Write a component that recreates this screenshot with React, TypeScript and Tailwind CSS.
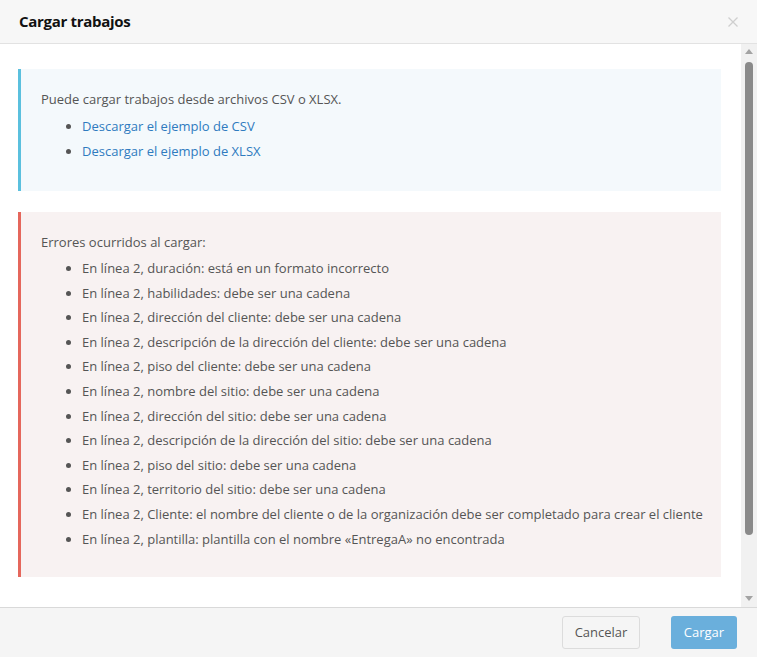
import React from "react"

const errores = [
  "En línea 2, duración: está en un formato incorrecto",
  "En línea 2, habilidades: debe ser una cadena",
  "En línea 2, dirección del cliente: debe ser una cadena",
  "En línea 2, descripción de la dirección del cliente: debe ser una cadena",
  "En línea 2, piso del cliente: debe ser una cadena",
  "En línea 2, nombre del sitio: debe ser una cadena",
  "En línea 2, dirección del sitio: debe ser una cadena",
  "En línea 2, descripción de la dirección del sitio: debe ser una cadena",
  "En línea 2, piso del sitio: debe ser una cadena",
  "En línea 2, territorio del sitio: debe ser una cadena",
  "En línea 2, Cliente: el nombre del cliente o de la organización debe ser completado para crear el cliente",
  "En línea 2, plantilla: plantilla con el nombre «EntregaA» no encontrada",
]

export default function App() {
  return (
    <div
      className="w-[757px] h-[657px] flex flex-col bg-white text-[13px] text-[#555]"
      style={{ fontFamily: '"Open Sans", "Noto Sans", sans-serif' }}
    >
      {/* Cabecera */}
      <div className="h-[44px] shrink-0 flex items-center justify-between bg-[#f7f7f7] border-b border-[#e2e2e2] pl-[19px] pr-[19px]">
        <h2 className="text-[15px] font-bold text-[#111] tracking-[-0.3px]">Cargar trabajos</h2>
        <svg width="10" height="10" viewBox="0 0 10 10" className="mt-[1px]">
          <path d="M0.5 0.5 L9.5 9.5 M9.5 0.5 L0.5 9.5" stroke="#cfcfcf" strokeWidth="1.3" />
        </svg>
      </div>

      {/* Cuerpo */}
      <div className="flex-1 flex min-h-0">
        <div className="flex-1 overflow-hidden pt-[25px] pl-[18px] pr-[20px]">
          <div className="bg-[#f4f9fc] border-l-[3px] border-[#5bc0de] pl-[20px] pt-[21px] pb-[27px]">
            <p className="leading-[18px]">Puede cargar trabajos desde archivos CSV o XLSX.</p>
            <ul className="mt-[6px] pl-[41px] list-disc">
              <li className="leading-[25px]">
                <a href="#" className="text-[#2f7bbf]">Descargar el ejemplo de CSV</a>
              </li>
              <li className="leading-[25px]">
                <a href="#" className="text-[#2f7bbf]">Descargar el ejemplo de XLSX</a>
              </li>
            </ul>
          </div>

          <div className="mt-[21px] bg-[#f8f2f2] border-l-[3px] border-[#e5675c] pl-[20px] pt-[21px] pb-[26px]">
            <p className="leading-[18px]">Errores ocurridos al cargar:</p>
            <ul className="mt-[5px] pl-[41px] list-disc">
              {errores.map((e, i) => (
                <li key={i} className="leading-[24.6px]">{e}</li>
              ))}
            </ul>
          </div>
        </div>

        {/* Barra de desplazamiento */}
        <div className="w-[16px] shrink-0 bg-[#f1f1f1] flex flex-col items-center py-[4px]">
          <svg width="8" height="6" viewBox="0 0 8 6" className="mt-[1px]">
            <path d="M0 5 L4 0 L8 5 Z" fill="#a3a3a3" />
          </svg>
          <div className="w-[8px] h-[473px] mt-[7px] rounded-full bg-[#8a8a8a]" />
          <div className="flex-1" />
          <svg width="8" height="6" viewBox="0 0 8 6" className="mb-[1px]">
            <path d="M0 0 L8 0 L4 5 Z" fill="#a3a3a3" />
          </svg>
        </div>
      </div>

      {/* Pie */}
      <div className="h-[50px] shrink-0 bg-[#f5f5f5] border-t border-[#d9d9d9] flex items-center justify-end gap-[31px] pr-[20px]">
        <button className="h-[33px] w-[78px] rounded-[3px] border border-[#dcdcdc] bg-[#f5f5f5] text-[13px] text-[#555]">
          Cancelar
        </button>
        <button className="h-[33px] w-[66px] rounded-[3px] bg-[#6aafdc] text-[13px] text-white">
          Cargar
        </button>
      </div>
    </div>
  )
}
